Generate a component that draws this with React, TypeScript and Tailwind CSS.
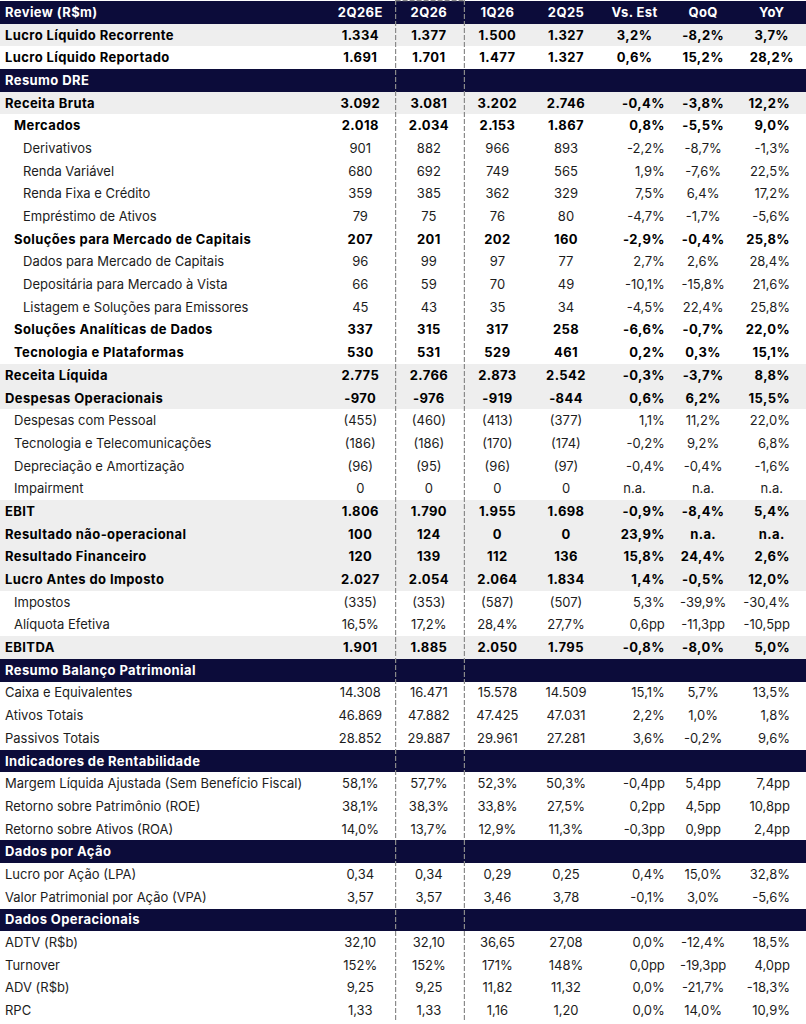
import React from 'react'

type Row = {
  label: string
  vals?: string[]
  bold?: boolean
  gray?: boolean
  indent?: 0 | 1 | 2
  section?: boolean
  top?: boolean
}

const rows: Row[] = [
  { label: 'Lucro Líquido Recorrente', vals: ['1.334', '1.377', '1.500', '1.327', '3,2%', '-8,2%', '3,7%'], bold: true, gray: true, top: true },
  { label: 'Lucro Líquido Reportado', vals: ['1.691', '1.701', '1.477', '1.327', '0,6%', '15,2%', '28,2%'], bold: true, top: true },
  { label: 'Resumo DRE', section: true },
  { label: 'Receita Bruta', vals: ['3.092', '3.081', '3.202', '2.746', '-0,4%', '-3,8%', '12,2%'], bold: true, gray: true },
  { label: 'Mercados', vals: ['2.018', '2.034', '2.153', '1.867', '0,8%', '-5,5%', '9,0%'], bold: true, indent: 1 },
  { label: 'Derivativos', vals: ['901', '882', '966', '893', '-2,2%', '-8,7%', '-1,3%'], indent: 2 },
  { label: 'Renda Variável', vals: ['680', '692', '749', '565', '1,9%', '-7,6%', '22,5%'], indent: 2 },
  { label: 'Renda Fixa e Crédito', vals: ['359', '385', '362', '329', '7,5%', '6,4%', '17,2%'], indent: 2 },
  { label: 'Empréstimo de Ativos', vals: ['79', '75', '76', '80', '-4,7%', '-1,7%', '-5,6%'], indent: 2 },
  { label: 'Soluções para Mercado de Capitais', vals: ['207', '201', '202', '160', '-2,9%', '-0,4%', '25,8%'], bold: true, indent: 1 },
  { label: 'Dados para Mercado de Capitais', vals: ['96', '99', '97', '77', '2,7%', '2,6%', '28,4%'], indent: 2 },
  { label: 'Depositária para Mercado à Vista', vals: ['66', '59', '70', '49', '-10,1%', '-15,8%', '21,6%'], indent: 2 },
  { label: 'Listagem e Soluções para Emissores', vals: ['45', '43', '35', '34', '-4,5%', '22,4%', '25,8%'], indent: 2 },
  { label: 'Soluções Analíticas de Dados', vals: ['337', '315', '317', '258', '-6,6%', '-0,7%', '22,0%'], bold: true, indent: 1 },
  { label: 'Tecnologia e Plataformas', vals: ['530', '531', '529', '461', '0,2%', '0,3%', '15,1%'], bold: true, indent: 1 },
  { label: 'Receita Líquida', vals: ['2.775', '2.766', '2.873', '2.542', '-0,3%', '-3,7%', '8,8%'], bold: true, gray: true },
  { label: 'Despesas Operacionais', vals: ['-970', '-976', '-919', '-844', '0,6%', '6,2%', '15,5%'], bold: true, gray: true },
  { label: 'Despesas com Pessoal', vals: ['(455)', '(460)', '(413)', '(377)', '1,1%', '11,2%', '22,0%'], indent: 1 },
  { label: 'Tecnologia e Telecomunicações', vals: ['(186)', '(186)', '(170)', '(174)', '-0,2%', '9,2%', '6,8%'], indent: 1 },
  { label: 'Depreciação e Amortização', vals: ['(96)', '(95)', '(96)', '(97)', '-0,4%', '-0,4%', '-1,6%'], indent: 1 },
  { label: 'Impairment', vals: ['0', '0', '0', '0', 'n.a.', 'n.a.', 'n.a.'], indent: 1 },
  { label: 'EBIT', vals: ['1.806', '1.790', '1.955', '1.698', '-0,9%', '-8,4%', '5,4%'], bold: true, gray: true },
  { label: 'Resultado não-operacional', vals: ['100', '124', '0', '0', '23,9%', 'n.a.', 'n.a.'], bold: true, gray: true },
  { label: 'Resultado Financeiro', vals: ['120', '139', '112', '136', '15,8%', '24,4%', '2,6%'], bold: true, gray: true },
  { label: 'Lucro Antes do Imposto', vals: ['2.027', '2.054', '2.064', '1.834', '1,4%', '-0,5%', '12,0%'], bold: true, gray: true },
  { label: 'Impostos', vals: ['(335)', '(353)', '(587)', '(507)', '5,3%', '-39,9%', '-30,4%'], indent: 1 },
  { label: 'Alíquota Efetiva', vals: ['16,5%', '17,2%', '28,4%', '27,7%', '0,6pp', '-11,3pp', '-10,5pp'], indent: 1 },
  { label: 'EBITDA', vals: ['1.901', '1.885', '2.050', '1.795', '-0,8%', '-8,0%', '5,0%'], bold: true, gray: true },
  { label: 'Resumo Balanço Patrimonial', section: true },
  { label: 'Caixa e Equivalentes', vals: ['14.308', '16.471', '15.578', '14.509', '15,1%', '5,7%', '13,5%'] },
  { label: 'Ativos Totais', vals: ['46.869', '47.882', '47.425', '47.031', '2,2%', '1,0%', '1,8%'] },
  { label: 'Passivos Totais', vals: ['28.852', '29.887', '29.961', '27.281', '3,6%', '-0,2%', '9,6%'] },
  { label: 'Indicadores de Rentabilidade', section: true },
  { label: 'Margem Líquida Ajustada (Sem Benefício Fiscal)', vals: ['58,1%', '57,7%', '52,3%', '50,3%', '-0,4pp', '5,4pp', '7,4pp'] },
  { label: 'Retorno sobre Patrimônio (ROE)', vals: ['38,1%', '38,3%', '33,8%', '27,5%', '0,2pp', '4,5pp', '10,8pp'] },
  { label: 'Retorno sobre Ativos (ROA)', vals: ['14,0%', '13,7%', '12,9%', '11,3%', '-0,3pp', '0,9pp', '2,4pp'] },
  { label: 'Dados por Ação', section: true },
  { label: 'Lucro por Ação (LPA)', vals: ['0,34', '0,34', '0,29', '0,25', '0,4%', '15,0%', '32,8%'] },
  { label: 'Valor Patrimonial por Ação (VPA)', vals: ['3,57', '3,57', '3,46', '3,78', '-0,1%', '3,0%', '-5,6%'] },
  { label: 'Dados Operacionais', section: true },
  { label: 'ADTV (R$b)', vals: ['32,10', '32,10', '36,65', '27,08', '0,0%', '-12,4%', '18,5%'] },
  { label: 'Turnover', vals: ['152%', '152%', '171%', '148%', '0,0pp', '-19,3pp', '4,0pp'] },
  { label: 'ADV (R$b)', vals: ['9,25', '9,25', '11,82', '11,32', '0,0%', '-21,7%', '-18,3%'] },
  { label: 'RPC', vals: ['1,33', '1,33', '1,16', '1,20', '0,0%', '14,0%', '10,9%'] },
]

const columns = ['2Q26E', '2Q26', '1Q26', '2Q25', 'Vs. Est', 'QoQ', 'YoY']

const indentClass = ['pl-[5px]', 'pl-[14px]', 'pl-[23px]']

function cellAlign(col: number, value: string, top?: boolean) {
  if (col < 4 || col === 5) return 'justify-center'
  if (top || value === 'n.a.') return 'justify-center'
  if (col === 4) return 'justify-end pr-[4px]'
  return 'justify-end pr-[16px]'
}

// dashed frame drawn around the 2Q26 column, sits over the rows
function ColumnFrame() {
  return (
    <svg className="pointer-events-none absolute top-0 left-[395px]" width="70" height="1024">
      <g stroke="#8a8a8a" strokeWidth="1.2" strokeDasharray="5 2" fill="none">
        <line x1="0.6" y1="0.6" x2="69.4" y2="0.6" />
        <line x1="0.6" y1="0" x2="0.6" y2="1024" />
        <line x1="69.4" y1="0" x2="69.4" y2="1024" />
      </g>
    </svg>
  )
}

export default function App() {
  return (
    <div
      className="relative w-[806px] bg-white pt-[1px] text-[13px] leading-none text-[#1c1c1c]"
      style={{ fontFamily: 'Inter, "Liberation Sans", sans-serif' }}
    >
      <div className="grid h-[22.7px] grid-cols-[326px_repeat(7,1fr)] bg-[#0c0c3a] font-bold tracking-[0.4px] text-white">
        <div className="flex items-center pl-[5px]">Review (R$m)</div>
        {columns.map((c) => (
          <div key={c} className="flex items-center justify-center">
            {c}
          </div>
        ))}
      </div>

      {rows.map((row) => {
        if (row.section) {
          return (
            <div
              key={row.label}
              className="flex h-[22.7px] items-center bg-[#0c0c3a] pl-[5px] font-bold tracking-[0.4px] text-white"
            >
              {row.label}
            </div>
          )
        }
        return (
          <div
            key={row.label}
            className={`grid h-[22.7px] grid-cols-[326px_repeat(7,1fr)] ${row.gray ? 'bg-[#eeeeee]' : 'bg-white'} ${
              row.bold ? 'font-bold tracking-[0.4px] text-black' : ''
            }`}
          >
            <div className={`flex items-center whitespace-nowrap ${indentClass[row.indent ?? 0]}`}>{row.label}</div>
            {row.vals!.map((v, i) => (
              <div key={i} className={`flex items-center whitespace-nowrap ${cellAlign(i, v, row.top)}`}>
                {v}
              </div>
            ))}
          </div>
        )
      })}

      <ColumnFrame />
    </div>
  )
}
